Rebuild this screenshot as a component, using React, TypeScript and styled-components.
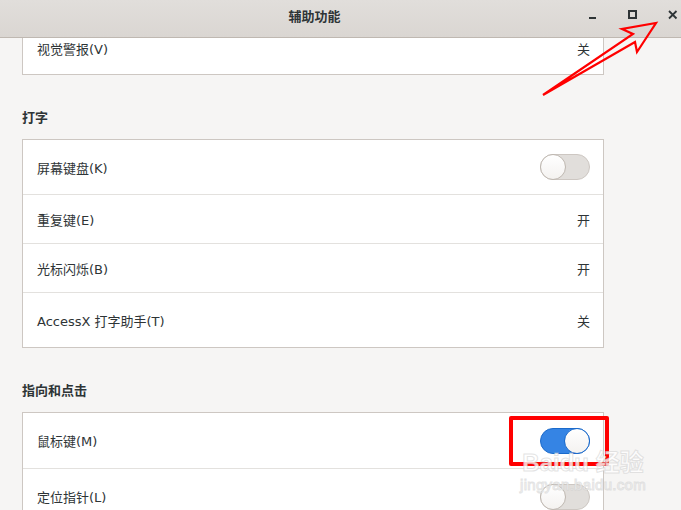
import React from 'react';
import styled, { createGlobalStyle } from 'styled-components';

const GlobalStyle = createGlobalStyle`
  html, body {
    margin: 0;
    padding: 0;
    background: #f6f5f4;
  }
  body {
    font-family: 'DejaVu Sans', 'Noto Sans CJK SC', sans-serif;
    font-size: 13px;
    color: #2e3436;
  }
`;

interface IRow {
  label: string;
  value?: string;
  toggle?: boolean;
  height: number;
}

const typing: IRow[] = [
  { label: '屏幕键盘(K)', toggle: false, height: 54 },
  { label: '重复键(E)', value: '开', height: 48 },
  { label: '光标闪烁(B)', value: '开', height: 48 },
  { label: 'AccessX 打字助手(T)', value: '关', height: 54 },
];

const pointing: IRow[] = [
  { label: '鼠标键(M)', toggle: true, height: 55 },
  { label: '定位指针(L)', toggle: false, height: 55 },
];

const Switch: React.FC<{ on: boolean }> = ({ on }) => (
  <Track $on={on}>
    <Knob $on={on} />
  </Track>
);

const Card: React.FC<{ rows: IRow[]; first?: boolean }> = ({ rows, first }) => (
  <List $first={first}>
    {rows.map((r) => (
      <Row key={r.label} $height={r.height}>
        <span>{r.label}</span>
        {r.toggle !== undefined ? <Switch on={r.toggle} /> : <Value>{r.value}</Value>}
      </Row>
    ))}
  </List>
);

const App: React.FC = () => (
  <Window>
    <GlobalStyle />
    <TitleBar>
      <Title>辅助功能</Title>
      <Controls>
        <CtrlButton aria-label="minimize">
          <svg width="10" height="10" viewBox="0 0 10 10">
            <rect x="1" y="7" width="7" height="2" fill="#2e3436" />
          </svg>
        </CtrlButton>
        <CtrlButton aria-label="maximize">
          <svg width="10" height="10" viewBox="0 0 10 10">
            <rect x="1" y="1" width="7" height="7" fill="none" stroke="#2e3436" strokeWidth="2" />
          </svg>
        </CtrlButton>
        <CtrlButton aria-label="close">
          <svg width="10" height="10" viewBox="0 0 10 10">
            <path d="M1 1 L8.5 8.5 M8.5 1 L1 8.5" stroke="#2e3436" strokeWidth="1.8" />
          </svg>
        </CtrlButton>
      </Controls>
    </TitleBar>

    <Viewport>
      <Content>
        <Card first rows={[{ label: '视觉警报(V)', value: '关', height: 52 }]} />
        <Heading>打字</Heading>
        <Card rows={typing} />
        <Heading>指向和点击</Heading>
        <Card rows={pointing} />
      </Content>
    </Viewport>

    <Highlight />
    <Arrow width="681" height="120" viewBox="0 0 681 120">
      <polygon
        points="543,95 633,34 622,29 656,23 637,52 635,42"
        fill="none"
        stroke="#ff0000"
        strokeWidth="2.2"
        strokeLinejoin="miter"
      />
    </Arrow>
    <Watermark>
      <Brand>
        Bai<span>du</span> 经验
      </Brand>
      <Site>jingyan.baidu.com</Site>
    </Watermark>
  </Window>
);

const Window = styled.div`
  position: relative;
  width: 681px;
  height: 510px;
  overflow: hidden;
  display: flex;
  flex-direction: column;
  background: #f6f5f4;
`;

const TitleBar = styled.header`
  position: relative;
  z-index: 2;
  flex: 0 0 37px;
  display: flex;
  align-items: center;
  justify-content: center;
  padding-right: 52px;
  background: linear-gradient(#e1dedb, #dad6d2);
  border-bottom: 1px solid #bfb8b1;
`;

const Title = styled.div`
  font-weight: bold;
  font-size: 13px;
  color: #2e3436;
  margin-top: -7px;
`;

const Controls = styled.div`
  position: absolute;
  right: 3px;
  top: 9px;
  display: flex;
  gap: 29px;
`;

const CtrlButton = styled.div`
  width: 11px;
  height: 11px;
  display: flex;
  align-items: center;
  justify-content: center;
`;

const Viewport = styled.main`
  flex: 1;
  overflow: hidden;
`;

const Content = styled.div`
  margin-top: -17px;
  padding: 0 77px 0 22px;
`;

const List = styled.div<{ $first?: boolean }>`
  background: #ffffff;
  border: 1px solid #cdc7c2;
  ${(p) => (p.$first ? 'border-top-color: transparent;' : '')}
`;

const Row = styled.div<{ $height: number }>`
  height: ${(p) => p.$height}px;
  display: flex;
  align-items: center;
  justify-content: space-between;
  padding: 0 13px 0 14px;
  color: #2e3436;

  & + & {
    border-top: 1px solid #e3e1de;
  }
`;

const Value = styled.span`
  color: #2e3436;
`;

const Heading = styled.h3`
  margin: 33px 0 11px;
  font-size: 13px;
  line-height: 20px;
  font-weight: bold;
  color: #2e3436;
`;

const Track = styled.div<{ $on: boolean }>`
  position: relative;
  width: 48px;
  height: 24px;
  border-radius: 13px;
  border: 1px solid ${(p) => (p.$on ? '#1b6acb' : '#cdc7c2')};
  background: ${(p) => (p.$on ? '#3584e4' : '#e1dedb')};
`;

const Knob = styled.div<{ $on: boolean }>`
  position: absolute;
  top: -1px;
  ${(p) => (p.$on ? 'right: -1px;' : 'left: -1px;')}
  width: 24px;
  height: 24px;
  border-radius: 50%;
  border: 1px solid ${(p) => (p.$on ? '#1b6acb' : '#bfb8b1')};
  background: linear-gradient(#ffffff, #f4f2f0);
`;

const Highlight = styled.div`
  position: absolute;
  left: 509px;
  top: 416px;
  width: 100px;
  height: 50px;
  box-sizing: border-box;
  border: 4px solid #ff0000;
  border-radius: 2px;
  pointer-events: none;
`;

const Arrow = styled.svg`
  position: absolute;
  left: 0;
  top: 0;
  z-index: 3;
  pointer-events: none;
`;

const Watermark = styled.div`
  position: absolute;
  left: 521px;
  top: 449px;
  width: 124px;
  display: flex;
  flex-direction: column;
  align-items: center;
  pointer-events: none;
  color: rgba(255, 255, 255, 0.8);
  font-family: 'Liberation Sans', 'Noto Sans CJK SC', sans-serif;
  -webkit-text-stroke: 1px rgba(200, 200, 200, 0.5);
`;

const Brand = styled.div`
  font-size: 24px;
  font-weight: bold;
  line-height: 28px;
  white-space: nowrap;
`;

const Site = styled.div`
  font-size: 15px;
  line-height: 16px;
  letter-spacing: 0.3px;
  white-space: nowrap;
`;

export default App;
